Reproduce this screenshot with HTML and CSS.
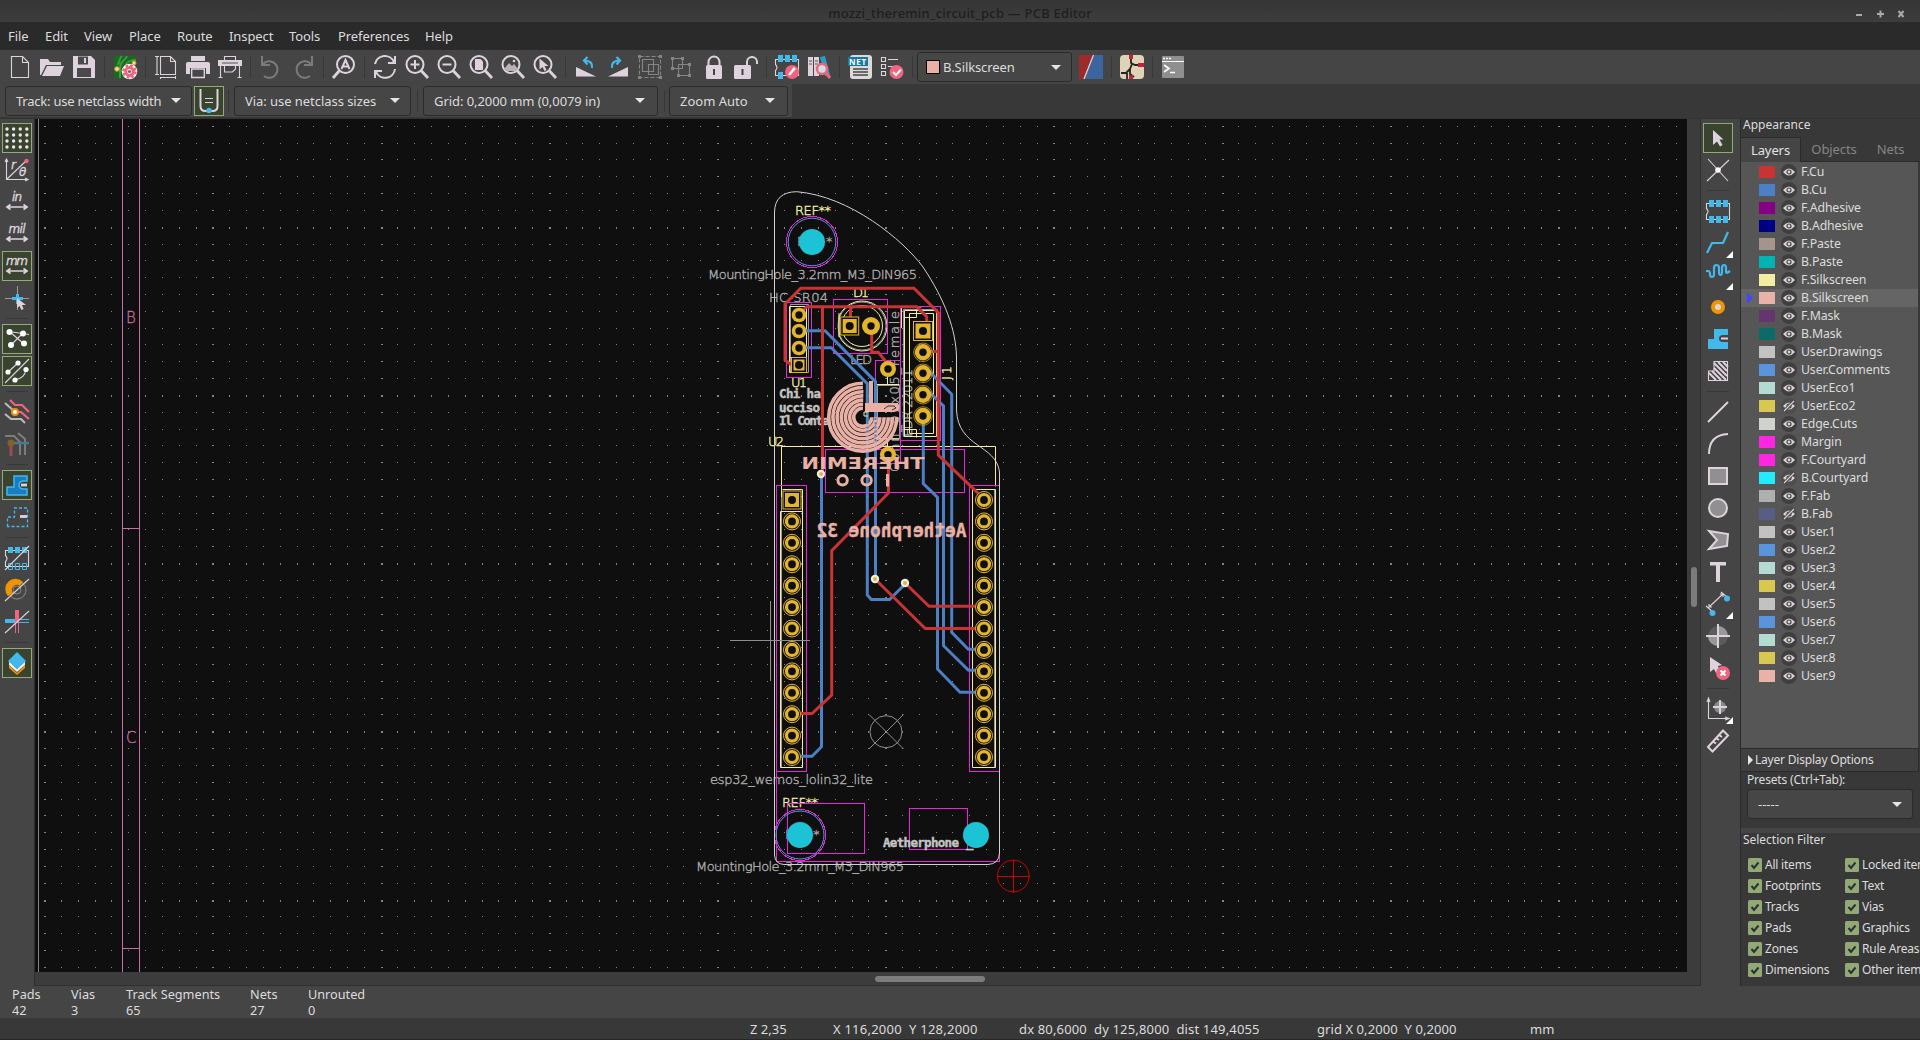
FILE: index.html
```html
<!DOCTYPE html>
<html lang="en">
<head>
<meta charset="utf-8">
<title>mozzi_theremin_circuit_pcb — PCB Editor</title>
<link rel="stylesheet" href="styles.css">
</head>
<body>
<div class="window">
<header class="titlebar"><span class="title">mozzi_theremin_circuit_pcb — PCB Editor</span>
<svg class="wm" width="54" height="10" viewBox="0 0 54 10"><path d="M1 6h6" class="wmb"/><path d="M22 5h7M25.500 1.500v7" class="wmb"/><path d="M43.500 2l5 6M48.500 2l-5 6" class="wmb"/></svg></header>
<nav class="menu"><span class="m1">File</span><span class="m2">Edit</span><span class="m3">View</span><span class="m4">Place</span><span class="m5">Route</span><span class="m6">Inspect</span><span class="m7">Tools</span><span class="m8">Preferences</span><span class="m9">Help</span></nav>

<div class="toolbar">
<i><svg viewBox="0 0 24 24"><path d="M3.500 1.500h11l6 6v15h-17zM14.500 1.500v6h6" class="s1"/></svg></i>
<i><svg viewBox="0 0 24 24"><path d="M0 20V4h8l2 3h11v3H6L1 20z" class="f"/><path d="M7 11h17l-4 10H2z" class="f"/></svg></i>
<i><svg viewBox="0 0 24 24"><path d="M1 1h18l4 4v18H1z" class="f"/><path d="M6 1.500h10v8H6zM5 13h14v9H5z" fill="#4a4a4a"/><path d="M12 3h2v5h-2z" class="f"/></svg></i>
<b></b>
<i><svg viewBox="0 0 24 24"><rect x="1" y="1" width="22" height="22" rx="3" fill="#176b1c"/><path d="M9 1c-4 3-1 6-5 9M14 1c-2 5-7 5-7 12v10M23 5c-8 0-11 4-11 8" fill="none" stroke="#3c9b3e" stroke-width="2"/><circle cx="4" cy="14" r="2.300" fill="#eee0a8" stroke="#d89526"/><circle cx="21" cy="8" r="2" fill="#eee0a8" stroke="#d89526"/><circle cx="16.500" cy="16.500" r="7.800" fill="#fff"/><circle cx="16.500" cy="16.500" r="6" fill="none" stroke="#f2647e" stroke-width="2.600" stroke-dasharray="2.600 2.110"/><circle cx="16.500" cy="16.500" r="3.900" fill="#fff" stroke="#f2647e" stroke-width="3"/><circle cx="16.500" cy="16.500" r="1.600" fill="#666"/></svg></i>
<b></b>
<i><svg viewBox="0 0 24 24"><path d="M6.500 1.500h10l5 5v13h-15zM16.500 1.500v5h5M1 1.500h4M3 1.500v18M1 19.500h4M6.500 22v2M21.500 21v3M6.500 22.500h15" class="s1"/></svg></i>
<i><svg viewBox="0 0 24 24"><path d="M5 1h14v5H5zM2 7h20q2 0 2 2v10h-4v-6H4v6H0V9q0-2 2-2z" class="f"/><path d="M5.700 14h12.600v8.500H5.700z" fill="#474747" stroke="#ded3dd" stroke-width="1.400"/></svg></i>
<i><svg viewBox="0 0 24 24"><path d="M6.500 1.500h11v4h-11z" class="s1"/><path d="M0 5h24v6H0z" class="f"/><path d="M6.500 9v8h8l3-3V9M2.500 11v12M21.500 11v12M.5 22.500h4M19.500 22.500h4" class="s1" fill="#474747"/><path d="M4 8h16" stroke="#555"/></svg></i>
<b></b>
<i><svg viewBox="0 0 24 24"><path d="M3 1v9h8M3.500 9.500A8.300 8.300 0 1 1 5 21" class="sd"/></svg></i>
<i><svg viewBox="0 0 24 24"><path d="M21 1v9h-8M20.500 9.500A8.300 8.300 0 1 0 19 21" class="sd"/></svg></i>
<b></b>
<i><svg viewBox="0 0 24 24"><circle cx="13.500" cy="9.500" r="8.500" class="s2"/><path d="M7.500 15.500L1 23" class="s3"/><path d="M9.500 14l4-9 4 9M11 11.500h5" class="s2"/></svg></i>
<b></b>
<i><svg viewBox="0 0 24 24"><path d="M2 9A10 10 0 0 1 21 7M22 1v7h-7M22 14A10 10 0 0 1 3 17M2 23v-7h7" class="s2"/></svg></i>
<i><svg viewBox="0 0 24 24"><circle cx="10" cy="9.500" r="8.500" class="s2"/><path d="M16 15.500l7 7.500" class="s3"/><path d="M5.500 9.500h9M10 5v9" class="s2"/></svg></i>
<i><svg viewBox="0 0 24 24"><circle cx="10" cy="9.500" r="8.500" class="s2"/><path d="M16 15.500l7 7.500" class="s3"/><path d="M5.500 9.500h9" class="s2"/></svg></i>
<i><svg viewBox="0 0 24 24"><circle cx="10" cy="9.500" r="8.500" class="s2"/><path d="M16 15.500l7 7.500" class="s3"/><path d="M6 4h5.500L14 6.500V15H6z" class="f"/></svg></i>
<i><svg viewBox="0 0 24 24"><circle cx="10" cy="9.500" r="8.500" class="s2"/><path d="M16 15.500l7 7.500" class="s3"/><path d="M3 14l5-6 3 3 2-2 4 5-2 2H5z" fill="#b9b1b8"/><circle cx="13" cy="6" r="1.300" class="f"/></svg></i>
<i><svg viewBox="0 0 24 24"><circle cx="10" cy="9.500" r="8.500" class="s2"/><path d="M16 15.500l7 7.500" class="s3"/><path d="M6.500 3.500v11l3-2.500 2 4 2-1-2-4h4z" class="f"/></svg></i>
<b></b>
<i><svg viewBox="0 0 24 24"><path d="M2 12l20 9.500H2z" class="f"/><path d="M18 13q1-7-7-7.500M13.500 2L10 5.500l3.500 4" class="blu"/></svg></i>
<i><svg viewBox="0 0 24 24"><path d="M22 12L2 21.500h20z" class="f"/><path d="M6 13q-1-7 7-7.500M10.500 2L14 5.500l-3.500 4" class="blu"/></svg></i>
<i><svg viewBox="0 0 24 24"><path d="M1.500 1.500h21v21h-21z" class="dis" stroke-dasharray="4 2"/><path d="M4.500 4.500h11v12h-11zM10.500 9.500h10v10h-10z" class="dis" fill="#454545"/><path d="M0 0h3v3H0zM21 0h3v3h-3zM0 21h3v3H0zM21 21h3v3h-3z" fill="#858585"/></svg></i>
<i><svg viewBox="0 0 24 24"><path d="M2.500 3.500h10v10h-10zM8.500 9.500h11v11h-11z" class="dis" fill="#454545"/><path d="M1 2h3v3H1zM11 2h3v3h-3zM1 12h3v3H1zM18 8h3v3h-3zM7 19h3v3H7zM18 19h3v3h-3z" fill="#858585"/></svg></i>
<i><svg viewBox="0 0 24 24"><path d="M6.500 11V7a5.500 5.500 0 0 1 11 0v4" class="s2"/><rect x="4" y="10" width="16" height="14" rx="1.500" class="f"/><path d="M12 14v6" class="dk"/></svg></i>
<i><svg viewBox="0 0 24 24"><path d="M13 11V7a5 5 0 0 1 10 0v2" class="s2"/><rect x="0" y="10" width="17" height="14" rx="1.500" class="f"/><path d="M8.500 14v6" class="dk"/></svg></i>
<b></b>
<i><svg viewBox="0 0 24 24"><path d="M.5 4.500h23v16H.5v-5q3-3 0-6z" class="s1"/><path d="M3 0h5v7H3zM10 0h5v7h-5zM17 0h5v7h-5zM3 17h5v7H3z" class="bf"/><circle cx="17" cy="17" r="7" fill="#f2647e"/><path d="M14 20l5-6M18 13l2 2" stroke="#fff" stroke-width="2.500"/></svg></i>
<i><svg viewBox="0 0 24 24"><path d="M1 2h5v19H1zM7 2h5v19H7z" class="f"/><path d="M13 2l5-1 5 19-5 1z" fill="#2e9bc7"/><path d="M2 6h3M2 9h3M8 6h3M8 9h3" stroke="#555"/><circle cx="15" cy="14" r="5" fill="#c6e3eb" stroke="#f2647e" stroke-width="2.500"/><path d="M19 18l4 5" stroke="#f2647e" stroke-width="3"/></svg></i>
<b></b>
<i><svg viewBox="0 0 24 24"><rect x="2" y="0" width="22" height="24" rx="3" fill="#dcd9da"/><path d="M5 14h15M5 17h15M5 20h15" stroke="#454545" stroke-width="1.500"/><path d="M0 2h20v9H0z" fill="#1678a5"/><text x="1" y="9.500" class="net" textLength="17">NET</text></svg></i>
<i><svg viewBox="0 0 24 24"><path d="M1.500 2.500h4v4h-4zM1.500 9.500h4v4h-4zM1.500 16.500h4v4h-4zM8 4.500h10M8 11.500h7" class="s1"/><circle cx="16.500" cy="17" r="7" fill="#f2647e"/><path d="M13 17l3 3 5-5.500" stroke="#fff" stroke-width="2" fill="none"/></svg></i>
<b></b>
<div class="combo layercombo"><em class="sw silk"></em><span>B.Silkscreen</span><u></u></div>
<i><svg viewBox="0 0 24 24"><path d="M0 0h15L5 24H0z" fill="#9e2a2c"/><path d="M15 0h9v24H5z" fill="#3d659d"/><path d="M14.500 0L5 24" stroke="#ddd" stroke-width="1.200"/></svg></i>
<b></b>
<i><svg viewBox="0 0 24 24"><rect width="24" height="24" rx="4" fill="#ded2b7"/><path d="M11 2v6l4 2h7M12 9l-2 5v5l4 3M10 14l-4 4H1M7 24v-6" fill="none" stroke="#27231f" stroke-width="1.800"/><path d="M9 0h4v4H9zM18 8h6v4h-6zM9 20h4v4H9z" fill="#c41f3c"/></svg></i>
<b></b>
<i><svg viewBox="0 0 24 24"><rect x="1" y="1" width="22" height="22" rx="1" fill="#8f8f8f"/><path d="M2 3.500h8" stroke="#fff" stroke-width="1.500" stroke-dasharray="2 1"/><path d="M1 6.500h22" stroke="#fff"/><path d="M3 10l5 3.500L3 17M9 17.500h5" stroke="#fff" fill="none" stroke-width="1.600"/></svg></i>
</div>

<div class="toolbar2"><div class="tb2in">
<div class="combo c1"><span>Track: use netclass width</span><u></u></div>
<i class="on"><svg viewBox="0 0 24 24"><path d="M3.500 0v17q0 5 5 5h7q5 0 5-5V0" class="s2"/><path d="M8 9.500h8M8 13.500h8" class="s1"/><circle cx="12" cy="21.500" r="2.800" class="bf"/></svg></i><b></b>
<div class="combo c2"><span>Via: use netclass sizes</span><u></u></div><b></b>
<div class="combo c3"><span>Grid: 0,2000 mm (0,0079 in)</span><u></u></div><b></b>
<div class="combo c4"><span>Zoom Auto</span><u></u></div>
</div></div>

<main class="work">
<aside class="tools left">
<i class="on"><svg viewBox="0 0 24 24"><path d="M2 3h21M2 9h21M2 15h21M2 21h21" stroke="#eee6ed" stroke-width="3.400" stroke-linecap="round" stroke-dasharray="0.010 6.600"/></svg></i>
<i><svg viewBox="0 0 24 24"><path d="M1.500 1v20.500h21M0 4l1.500-3L3 4M20 20l3 1.500-3 1.500M2 21L21 3" class="s1"/><text x="6" y="11" class="ic">r</text><text x="14" y="18" class="ic it">θ</text><circle cx="21.500" cy="3" r="2.200" fill="#f2647e"/></svg></i>
<i><svg viewBox="0 0 24 24"><text x="12" y="11" class="ic mid" textLength="10">in</text><path d="M2 17h20M5.500 14.500L2 17l3.500 2.500M18.500 14.500L22 17l-3.500 2.500" class="s15"/></svg></i>
<i><svg viewBox="0 0 24 24"><text x="12" y="11" class="ic mid" textLength="17">mil</text><path d="M2 17h20M5.500 14.500L2 17l3.500 2.500M18.500 14.500L22 17l-3.500 2.500" class="s15"/></svg></i>
<i class="on"><svg viewBox="0 0 24 24"><text x="12" y="11" class="ic mid" textLength="22">mm</text><path d="M2 17h20M5.500 14.500L2 17l3.500 2.500M18.500 14.500L22 17l-3.500 2.500" class="s15"/></svg></i>
<i><svg viewBox="0 0 24 24"><path d="M12.500 0v24M0 12.500h24" stroke="#9a9a9a"/><path d="M7 12.500h11M12.500 8v10" stroke="#42b8eb" stroke-width="3"/><path d="M12 12v10l2.500-2 2 4 2-1-1.500-4h4z" class="f"/></svg></i>
<b></b>
<i class="on"><svg viewBox="0 0 24 24"><path d="M5 5l14 12M4 4.500l20 3M6 18L18 6" class="s1"/><g fill="#fff"><circle cx="4.500" cy="5" r="3"/><circle cx="18" cy="6.500" r="3"/><circle cx="6" cy="18" r="3"/><circle cx="19" cy="16.500" r="3"/></g></svg></i>
<i class="on"><svg viewBox="0 0 24 24"><path d="M0 24L24 0M3 13L13 4M9 21q11-1 12-11" class="s1"/><g fill="#fff"><circle cx="3" cy="13" r="2.600"/><circle cx="13" cy="4" r="2.600"/><circle cx="10" cy="21" r="2.600"/><circle cx="21" cy="10.500" r="2.600"/></g></svg></i>
<b></b>
<i><svg viewBox="0 0 24 24"><path d="M0 3l9 8M0 14l6 5h10l4 4" stroke="#bbb" stroke-width="2" fill="none"/><path d="M5 0l5 5h7l7 7M10 12h6l8 7" stroke="#f2647e" stroke-width="2.200" fill="none"/><circle cx="10" cy="12" r="3" fill="#fff" stroke="#ed920b" stroke-width="2"/></svg></i>
<i class="dim"><svg viewBox="0 0 24 24"><path d="M0 4h9l6 6v13M13 1l7 6v16" stroke="#aaa" stroke-width="2" fill="none"/><path d="M6 11v13" stroke="#e0506c" stroke-width="3"/><path d="M6 11h18" stroke="#42a8cb" stroke-width="2.500"/><circle cx="6" cy="11" r="3.500" fill="#bb7512"/></svg></i>
<b></b>
<i class="on"><svg viewBox="0 0 24 24"><path d="M2 22V14h7V3h13v5h-3q-5 0-5 4t5 4h3v6z" fill="#177ec1" stroke="#42b8eb" stroke-width="1.500"/><path d="M16 12h6" class="s3"/></svg></i>
<i><svg viewBox="0 0 24 24"><path d="M2.500 21.500V12h7V3h13v18.500z" stroke="#42b8eb" fill="none" stroke-width="1.300" stroke-dasharray="3 2"/><path d="M15 11.500h7" class="s3"/></svg></i>
<b></b>
<i><svg viewBox="0 0 24 24"><path d="M.5 4.500h23v16H.5v-5q3-3 0-6z" class="s1"/><path d="M3 1h5v6H3zM10 1h5v6h-5zM17 1h5v6h-5z" class="bf"/><path d="M3.500 17.500h4v6h-4zM10.500 17.500h4v6h-4zM17.500 17.500h4v6h-4z" stroke="#42b8eb" fill="none"/><path d="M0 24L24 0" class="s1"/></svg></i>
<i><svg viewBox="0 0 24 24"><circle cx="12" cy="12" r="9" fill="none" stroke="#777" stroke-width="1.300"/><path d="M3 18A9.500 9.500 0 0 1 18 4L15 8A5 5 0 0 0 8 15z" fill="#f09400"/><circle cx="12" cy="12" r="4" fill="none" stroke="#888"/><path d="M0 23L24 1" class="s1"/></svg></i>
<i><svg viewBox="0 0 24 24"><path d="M0 11h13" stroke="#42b8eb" stroke-width="4"/><path d="M13 9.500h11M13 12.500h11" stroke="#42b8eb"/><path d="M12 0v12" stroke="#f2647e" stroke-width="4"/><path d="M10.500 12v11M13.500 12v11" stroke="#f2647e"/><path d="M0 23L24 1" class="s1"/></svg></i>
<b></b>
<i class="on"><svg viewBox="0 0 24 24"><path d="M4 14l8 8 8-8v3l-8 7-8-7z" fill="#f09400"/><path d="M4 10l8 8 8-8v4l-8 7-8-7z" fill="#eee"/><path d="M12 1l9 9-9 8-9-8z" class="bf"/></svg></i>
</aside>

<section class="canvaswrap">
<svg class="pcb" width="1652" height="853" viewBox="35 119 1652 853">
<path id="grid" shape-rendering="crispEdges" fill="#858585"/>
<g shape-rendering="crispEdges" fill="none"><path d="M38.500 119v853" stroke="#848484"/><path d="M122.500 119v853M139.500 119v853M122 528.500h17M122 948.500h17" stroke="#c86ea8"/></g>
<g class="sheet"><text x="126" y="322.500">B</text><text x="126" y="742.500">C</text></g>

<g class="fab">
<text x="708" y="278.500" textLength="209">MountingHole_3.2mm_M3_DIN965</text>
<text x="769" y="301.500" textLength="59">HC-SR04</text><text x="850" y="364" textLength="22">LED</text>
<text transform="translate(899 472) rotate(-90)" textLength="161">Conn_01x05_Female</text>
<text transform="translate(912 437) rotate(-90)" textLength="68">EDR 22011</text>
<text x="710" y="783.500" textLength="163">esp32_wemos_lolin32_lite</text>
<text x="696" y="870.500" textLength="208">MountingHole_3.2mm_M3_DIN965</text>
<text x="797" y="246">R</text><text x="826" y="246">*</text><text x="785" y="839">R</text><text x="813" y="839">*</text>
</g>
<g class="fabline"><path d="M790.500 304.500h18v68h-18zM903.500 309.500h34v127h-34zM877.500 385.500h22v53h-22zM781.500 489v278M994.500 489v278"/><circle cx="862" cy="326" r="24"/></g>
<g class="silk1">
<path d="M789.500 306.500h17v66h-17zM789.500 357.500h17M904.500 310.500h32v126h-32zM909.500 313.500h24v120h-24zM904.500 317.500h12v-8M904.500 429.500h12v8M901.500 328v-21h20M781.500 497v-50.500h214v40"/>
<path d="M887.500 377v8M887.500 439v8M876.500 384.500h23M876.500 439h23M780.500 511.500h22v256h-22zM782.500 489.500h20v22M972.500 489.500h23v278h-23z"/>
<path d="M839 316.500a25 25 0 1 1 0 19zM839 313v24"/><circle cx="862" cy="326" r="20.500"/></g>
<g class="silkt"><text x="795" y="214.500" textLength="36">REF**</text><text x="853" y="297" textLength="16">D1</text><text x="791" y="386.500" textLength="16">U1</text><text x="768" y="446" textLength="16">U2</text><text x="782" y="806.500" textLength="36">REF**</text><text transform="translate(951 380) rotate(-90)" textLength="14">J1</text></g>
<g class="court"><path d="M786.500 302.500h25v75h-25zM833.500 299.500h54v54h-54zM900.500 306.500h40v134h-40zM900.500 360.500h-25v103h25zM825.500 449.500h139v43h-139zM776.500 485.500h30v286h-30zM999.500 485.500h-30v286h30zM776.500 771v90.500h223v-376M787.500 803.500h77v50h-77zM909.500 808.500h58v41h-58z"/><circle cx="812" cy="242" r="25.500"/><circle cx="800" cy="835" r="25.500"/></g>
<g fill="none" stroke="#5b94e0"><circle cx="812" cy="242" r="23.800"/><circle cx="800" cy="835" r="24"/></g>
<path class="edge" d="M774.500 212Q775 192 796.700 191.700C850 196 903 240 923 267C945 300 956 330 956.500 357V410C958 448 996 444 999.500 472V853Q999 864 988 864.500H784Q775 864 774.500 855Z"/>
<g class="boldt"><text x="779" y="397.500" textLength="42">Chi ha</text><text x="779" y="411.500" textLength="41">ucciso</text><text x="779" y="425" textLength="50">Il Conte</text><text x="883" y="847" textLength="76">Aetherphone</text><text x="966" y="847">_</text></g>
<g class="blue"><path d="M805 330.700h20l50.500 51V579M805 347.700h26.300l36 36V595l4 4.500h18.300l16-16M923.300 416v67.700l14.200 13.600V669l22.500 23.300h20M929 392l14.500 14v239.700l25 24.600H984M929 371l22.700 23.300v238l16.600 17H984M821.500 474v272.700l-9.500 9.600h-17"/></g>
<g class="red"><path d="M799 364h-9l-5-4v-56l15.700-15.700H914l24.300 24.400V455l41 39.300M800 313l6.700-6.300h110l10 10V325M822.500 306.700V474M850.500 306.700V322M871.700 330v22.300h6.600l9.700 12M938 351.500h-14M888.500 460v33l-56.800 57.700V695L812 713.500h-17M875 579l50.300 49.500H984M905 583l24 23.300h55"/></g>
<g class="logo"><circle class="ring" cx="862.700" cy="417.300" r="34"/><circle class="ring" cx="862.700" cy="417.300" r="29.800"/><circle class="ring" cx="862.700" cy="417.300" r="25.600"/><circle class="ring" cx="862.700" cy="417.300" r="21.400"/><circle class="ring" cx="862.700" cy="417.300" r="17.200"/><circle class="ring" cx="862.700" cy="417.300" r="13"/><circle class="ring" cx="862.700" cy="417.300" r="9"/>
<path d="M869 381h4v22h25q3 4 0 8l-4 1h-29v-9h4z" fill="#e9b1a5"/><path d="M884 409l4-3h6l2 2-4 2" stroke="#333" fill="none" stroke-width="1"/><path d="M867.500 418v15M875.500 418v25" stroke="#4d7fc4" stroke-width="2" stroke-dasharray="2 2.200"/><path d="M868 416h-4v-4h4" stroke="#f2eda1" fill="none"/></g>
<g id="pads"></g>
<g class="mirror"><text transform="translate(924.500 469) scale(-1 1)" class="th" textLength="123" lengthAdjust="spacingAndGlyphs">THEREMIN</text><circle cx="842.600" cy="480.300" r="4.700"/><circle cx="866.600" cy="480.300" r="4.700"/><path d="M887.500 474v12.500"/><text transform="translate(966.500 536.500) scale(-1 1)" class="ae" textLength="150" lengthAdjust="spacingAndGlyphs">Aetherphone 32</text></g>
<g fill="#1cc3d5"><circle cx="812" cy="242" r="13"/><circle cx="800" cy="835" r="13"/><circle cx="976" cy="835" r="13"/></g>
<g fill="none" stroke="#8e8e8e"><circle cx="886" cy="731.700" r="16"/><path d="M869 714.500l34.500 34.500M903.500 714.500L869 749"/><path d="M730 640.500h80M770.500 601v80"/></g>
<g fill="none" stroke="#c80404"><circle cx="1013.300" cy="876" r="16"/><path d="M997 876.500h33M1013.500 860v33"/></g>
</svg>
<div class="vs"><s></s></div><div class="hs"><s></s></div>
</section>

<aside class="tools right">
<i class="on"><svg viewBox="0 0 24 24"><path d="M7 4v15l4-3.500 3 5 2.500-1.500-3-5.500h4z" class="f"/></svg></i>
<i><svg viewBox="0 0 24 24"><path d="M2 1l20 22M23 2L1 23" class="s1"/><circle cx="12" cy="12" r="2.800" fill="#fff"/></svg></i><b></b>
<i><svg viewBox="0 0 24 24"><path d="M.5 4.500h23v16H.5v-5q3-3 0-6z" class="s1"/><path d="M3 1h5v7H3zM10 1h5v7h-5zM17 1h5v7h-5zM3 17h5v7H3zM10 17h5v7h-5zM17 17h5v7h-5z" class="bf"/></svg></i>
<i class="more"><svg viewBox="0 0 24 24"><path d="M1 22l5-10h11l5-11" class="blu"/></svg></i>
<i class="more"><svg viewBox="0 0 24 24"><path d="M0 8h2q2 0 2 3t2 3 2-3V5q0-3 2.500-3T13 5v4q0 3 1.500 3T16 9V5q0-3 2-3t2 3v4q0 2 4-1" class="blu"/></svg></i>
<i><svg viewBox="0 0 24 24"><circle cx="12" cy="12" r="5" fill="#ded3dd" stroke="#f09400" stroke-width="4"/></svg></i>
<i><svg viewBox="0 0 24 24"><path d="M2 22V12h6V2h14v6h-5q-4 0-4 3.500t4 3.500h5v7z" class="bf"/><path d="M15 11.500h7" class="s2"/></svg></i>
<i><svg viewBox="0 0 24 24"><path d="M2.500 21.500V12H8V2.500h13.500v19z" class="s1"/><path d="M3 14l7 7M6 12l9 9M8 9l12 12M8 4l13 13M12 3l9 9M17 3l5 5" class="s2"/></svg></i><b></b>
<i><svg viewBox="0 0 24 24"><path d="M2 22L22 2" class="s2"/></svg></i>
<i><svg viewBox="0 0 24 24"><path d="M3 22Q3 3 22 2" class="s2"/></svg></i>
<i><svg viewBox="0 0 24 24"><path d="M3 4h18v16H3z" class="s2" fill="#909090"/></svg></i>
<i><svg viewBox="0 0 24 24"><circle cx="12" cy="12" r="9" class="s2" fill="#909090"/></svg></i>
<i><svg viewBox="0 0 24 24"><path d="M3 3l19 3-1 12-18 3 8-9z" class="s2" fill="#909090"/></svg></i>
<i><svg viewBox="0 0 24 24"><path d="M4 2h16v3.500h-6V22h-4V5.500H4z" class="f"/></svg></i>
<i class="more"><svg viewBox="0 0 24 24"><path d="M0 14l7 6M15 0l6 5M3 15L17 2M3 12v3h3M14 2h3v3" class="s1"/><circle cx="6.500" cy="21" r="3" class="bf"/><circle cx="21" cy="6.500" r="3" class="bf"/></svg></i>
<i><svg viewBox="0 0 24 24"><circle cx="12" cy="12" r="10" fill="#5c5c5c"/><path d="M12 2a10 10 0 0 1 10 10H12zM12 22A10 10 0 0 1 2 12h10z" fill="#999"/><path d="M12 0v24M0 12h24" class="s2"/></svg></i>
<i><svg viewBox="0 0 24 24"><path d="M4 1v15l4-3 2 4 4-2-2-5 4-1z" class="f"/><circle cx="17" cy="17" r="7" fill="#f2647e"/><path d="M14.500 14.500l5 5M19.500 14.500l-5 5" stroke="#fff" stroke-width="2.200"/></svg></i><b></b>
<i class="more"><svg viewBox="0 0 24 24"><path d="M2.500 2v19.500h20M1 5l1.500-4L4 5M19 20l4 1.500-4 1.500" class="s1"/><circle cx="14" cy="10" r="6" fill="#888"/><path d="M14 3v14M7 10h14" class="s2"/></svg></i>
<i><svg viewBox="0 0 24 24"><path d="M2 18L17 1.500l5 5L6.500 22.500zM13 6l3 2M10 9l3 2M7 12.500l3 2" class="s2"/></svg></i>
</aside>

<aside class="panel">
<h2>Appearance</h2>
<div class="tabs"><span class="tab act">Layers</span><span class="tab">Objects</span><span class="tab nets">Nets</span></div>
<div class="layers" id="layers"></div>
<div class="ldo"><em></em>Layer Display Options</div>
<div class="presets"><label>Presets (Ctrl+Tab):</label><div class="combo"><span>-----</span><u></u></div></div>
<h2 class="sf">Selection Filter</h2>
<div class="filter" id="filter"></div>
</aside>
</main>

<footer class="info"><div class="n1">Pads<br>42</div><div class="n2">Vias<br>3</div><div class="n3">Track Segments<br>65</div><div class="n4">Nets<br>27</div><div>Unrouted<br>0</div></footer>
<footer class="status"><span class="p1">Z 2,35</span><span class="p2">X 116,2000&nbsp; Y 128,2000</span><span class="p3">dx 80,6000&nbsp; dy 125,8000&nbsp; dist 149,4055</span><span class="p4">grid X 0,2000&nbsp; Y 0,2000</span><span>mm</span></footer>
</div>
<script src="script.js"></script>
</body>
</html>
```
FILE: styles.css
```css
*{box-sizing:border-box}
body{margin:0;background:#383838;font-family:"Noto Sans","Open Sans",sans-serif;font-size:12.5px;color:#dcdcdc;overflow:hidden}
.window{width:1920px;height:1040px;display:flex;flex-direction:column;overflow:hidden}
.titlebar{height:22px;background:linear-gradient(#353535,#3d3d3d);position:relative;text-align:center;line-height:27px;color:#1e1e1e;font-weight:500;overflow:hidden}
.title{font-size:13px;letter-spacing:.2px}
.wm{position:absolute;right:11px;top:9px}
.wmb{stroke:#aaa;stroke-width:2;fill:none}
.menu{height:28px;background:#2a2a2a;display:flex;padding-left:8px;line-height:29px;font-size:13px;letter-spacing:-.08px}
.menu span{white-space:nowrap}
.m1{width:37px}.m2{width:39px}.m3{width:45px}.m4{width:48px}.m5{width:52px}.m6{width:60px}.m7{width:49px}.m8{width:87px}
.toolbar{height:34px;background:#454545;display:flex;align-items:center;padding-left:4px}
i{flex:none;width:32px;height:32px;display:flex;align-items:center;justify-content:center;position:relative}
i svg{width:24px;height:24px;overflow:visible}
.toolbar>b,.tb2in>b{width:9px;height:22px;flex:none;background:linear-gradient(#373737,#373737) 4px 0/1px 100% no-repeat}
.f{fill:#ded3dd}.bf{fill:#42b8eb}
.s1,.s15,.s2,.s3{stroke:#ded3dd;fill:none;stroke-width:1.1}
.s15{stroke-width:1.7}.s2{stroke-width:2}.s3{stroke-width:2.8}
.s2[fill="#909090"]{fill:#909090}
.sd{fill:none;stroke:#7b7b7b;stroke-width:2}
.blu{fill:none;stroke:#42b8eb;stroke-width:2.2}
.dis{stroke:#858585;stroke-width:1.1;fill:none}
.dk{stroke:#444;stroke-width:2}
.net{font:bold 8px "Noto Sans",sans-serif;fill:#fff}
.ic{font-family:"DejaVu Sans",sans-serif;font-size:12px;fill:#ded3dd;stroke:#ded3dd;stroke-width:.3}
.mid{text-anchor:middle}.it{font-style:italic}
.combo{height:30px;border:1px solid #2a2a2a;border-radius:3px;background:#464646;display:flex;align-items:center;justify-content:space-between;padding:0 8px 0 10px;white-space:nowrap;flex:none;font-size:13px}
.combo u{width:0;height:0;border:5px solid transparent;border-top-color:#e4e4e4;border-bottom:0}
.layercombo{width:155px;justify-content:flex-start;padding-left:8px;margin-right:3px;letter-spacing:-.1px}
.layercombo span{margin-left:3px}.layercombo u{margin-left:auto;margin-right:2px}
.sw{width:14px;height:14px;border:1px solid #0a0a0a}
.silk{background:#e9b1a5}
.toolbar2{height:35px;background:#383838;border-bottom:1px solid #333}
.tb2in{width:792px;height:33px;background:#454545;display:flex;align-items:center;padding-left:5px}
.c1{width:187px;margin-right:2px;letter-spacing:-.23px}.c2{width:177px;margin:0 2px 0 1px;letter-spacing:-.05px}.c3{width:235px;margin:0 2px 0 1px;letter-spacing:-.07px}.c4{width:119px}
.c1 u{margin-right:2px}.c2 u{margin-right:2px}.c3 u,.c4 u{margin-right:4px}
.on{width:30px;height:30px;border:1px solid #93ab74;background:#39432f}
.work{height:867px;display:flex;background:#454545}
.tools{display:flex;flex-direction:column;align-items:center;padding-top:3px}
.tools i{height:32px}
.tools i.on{height:30px;margin:1px 0}
.tools b{height:9px;width:22px;flex:none;background:linear-gradient(#383838,#383838) 0 4px/100% 1px no-repeat}
.left{width:34px}
.right{width:39px;padding-right:5px}
.dim{opacity:.55}
.more:after{content:"";position:absolute;right:1px;bottom:1px;border:solid transparent;border-width:7px 0 0 7px;border-bottom:7px solid #fff;border-top:0}
.canvaswrap{width:1667px;height:867px;background:#3c3c3c;border-left:1px solid #2e2e2e;border-right:1px solid #303030;border-bottom:1px solid #303030;display:grid;grid-template:853px 13px/1652px 13px}
.pcb{background:#0f0f0f;display:block}
.vs s,.hs s{display:block;background:#7c7c7c;border-radius:4px}
.vs s{width:6px;height:40px;margin:448px 0 0 4px}
.hs s{height:6px;width:110px;margin:4px 0 0 840px}
.sheet{font:200 15px "DejaVu Sans",sans-serif;fill:#c86ea8;stroke:#c86ea8;stroke-width:.3}
.fab,.silkt{font:200 13px "DejaVu Sans",sans-serif;fill:#aaa;stroke:#aaa;stroke-width:.4}
.silkt{fill:#f2eda1;stroke:#f2eda1}
.fabline{fill:none;stroke:#999}
.silk1{fill:none;stroke:#f2eda1}
.court{fill:none;stroke:#e627d9;shape-rendering:crispEdges}
.edge{fill:none;stroke:#d0d2cd}
.boldt{font:bold 12.5px "DejaVu Sans Mono",monospace;fill:#c4c4c4;stroke:#c4c4c4;stroke-width:.4}
.blue,.red{fill:none;stroke:#4d7fc4;stroke-width:3}
.red{stroke:#c83434}
.ring{fill:none;stroke:#e9b1a5;stroke-width:3.6}
.mirror{fill:#e9b1a5}
.mirror circle,.mirror path{fill:none;stroke:#e9b1a5;stroke-width:3}
.th{font:bold 16.5px "DejaVu Sans",sans-serif}
.ae{font:bold 19.5px "DejaVu Sans Mono",monospace;stroke:#e9b1a5;stroke-width:.4}
.panel{width:180px;flex:none;background:#383838;border-left:1px solid #2b2b2b}
.panel h2{margin:0;height:18px;line-height:12px;padding-left:2px;font-size:12px;font-weight:400;letter-spacing:.02px}
.tabs{height:25px;display:flex;align-items:center;font-size:13px;color:#858585;border-bottom:1px solid #2b2b2b;letter-spacing:-.1px}
.tab{width:60px;height:25px;line-height:25px;text-align:center}
.tab.act{background:#454545;color:#e2e2e2;border:1px solid #2b2b2b;border-width:1px 1px 0 0}
.tab:nth-child(2){width:66px}.nets{width:47px}
.layers{height:586px;background:#565656;padding-top:1px;margin-right:2px;font-size:12.3px;letter-spacing:-.12px}
.row{height:18px;display:flex;align-items:center;line-height:18px;padding-left:18px;position:relative}
.row.sel{background:#656565}
.row.sel:before{content:"";position:absolute;left:6px;top:3px;border:6px solid transparent;border-left-color:#4545ff;border-right:0}
.row em{width:16px;height:12px;margin-right:6px}
.row svg{width:16px;height:16px;margin-right:4px}
.ldo{height:24px;border:1px solid #2b2b2b;border-left:0;background:#404040;line-height:22px;display:flex;align-items:center;margin-right:1px;white-space:nowrap;font-size:12px;letter-spacing:-.2px}
.ldo em{margin:0 2px 0 7px;border:5px solid transparent;border-left-color:#e6e6e6;border-right:0}
.presets{height:56px;padding-left:6px}
.presets label{display:block;line-height:16px;height:17px;font-size:12px;letter-spacing:-.18px}
.presets .combo{width:166px;height:30px;padding-right:10px}
.panel h2.sf{border-top:5px solid #454545;height:22px;line-height:14px;letter-spacing:-.03px}
.filter{display:grid;grid-template-columns:97px 120px;grid-auto-rows:21px;padding:4px 0 0 7px;height:136px;font-size:12px;letter-spacing:-.22px}
.chk{display:flex;align-items:center;white-space:nowrap}
.chk svg{width:14px;height:14px;margin-right:3px;flex:none}
.info{height:32px;background:#454545;display:flex;padding-left:12px;line-height:16px;white-space:nowrap;font-size:12.7px}
.n1{width:59px}.n2{width:55px}.n3{width:124px}.n4{width:58px}
.status{height:22px;background:#383838;border-bottom:1px solid #272727;display:flex;padding-left:750px;line-height:22px;white-space:nowrap;font-size:13px}
.p1{width:83px}.p2{width:186px;letter-spacing:.23px}.p3{width:298px;letter-spacing:.16px}.p4{width:213px;letter-spacing:.07px}
```
FILE: script.js
```js
// Grid dots, every tenth one drawn double width or height.
let d = '';
for (let c = 0; c < 98; c++) for (let r = -6; r < 45; r++) {
  const x = Math.floor(44.7 + 16.82 * c), y = Math.floor(227.2 + 16.82 * r);
  const w = c % 10 === 0 ? 2 : 1, h = r % 10 === 0 ? 2 : 1;
  if (y < 971) d += `M${x} ${y}h${w}v${h}h-${w}z`;
}
document.getElementById('grid').setAttribute('d', d);

// Open the rings of the spiral on their upper right quarter.
document.querySelectorAll('.ring').forEach(c => {
  const r = +c.getAttribute('r'), q = Math.PI * r / 2;
  c.setAttribute('stroke-dasharray', `${q * 3} ${q}`);
});

const Y = '#e3b52e', K = '#0f0f0f';
const round = (x, y) => `<circle cx="${x}" cy="${y}" r="9" fill="${K}"/><circle cx="${x}" cy="${y}" r="8.500" fill="none" stroke="${Y}"/><circle cx="${x}" cy="${y}" r="5.500" fill="none" stroke="${Y}" stroke-width="3.200"/>`;
const fat = (x, y, r) => `<circle cx="${x}" cy="${y}" r="${r}" fill="${Y}"/><circle cx="${x}" cy="${y}" r="3.700" fill="${K}"/>`;
const square = (x, y, s) => `<rect x="${x - s - 1.5}" y="${y - s - 1.5}" width="${2 * s + 3}" height="${2 * s + 3}" fill="${K}" stroke="${Y}"/><rect x="${x - s + .5}" y="${y - s + .5}" width="${2 * s - 1}" height="${2 * s - 1}" fill="${Y}"/><circle cx="${x}" cy="${y}" r="4" fill="${K}"/>`;
let p = square(792, 500, 7.5) + round(984, 500);
for (let i = 1; i < 13; i++) p += round(792, 500 + 21.42 * i) + round(984, 500 + 21.42 * i);
p += fat(799, 315, 7.3) + fat(799, 331, 7.3) + fat(799, 348, 7.3) + square(799, 365, 6);
p += square(849.7, 326, 7.5) + fat(871, 326, 9) + fat(888, 369, 8) + fat(888, 454.7, 8) + square(923, 331, 8);
[352.3, 373.3, 394.7, 416].forEach(y => p += fat(923, y, 8.2) + `<circle cx="923" cy="${y}" r="9.300" fill="none" stroke="${Y}" stroke-width=".7"/>`);
[[821, 474], [875, 579], [905, 583]].forEach(([x, y]) => p += `<circle cx="${x}" cy="${y}" r="4.200" fill="#eee"/><circle cx="${x}" cy="${y}" r="2" fill="${Y}"/>`);
document.getElementById('pads').innerHTML = p;

const layers = [['F.Cu','#c83434'],['B.Cu','#4d7fc4'],['F.Adhesive','#840084'],['B.Adhesive','#000084'],['F.Paste','#a4948c'],['B.Paste','#00b4b4'],['F.Silkscreen','#f2eda1'],['B.Silkscreen','#e8b2a7'],['F.Mask','#653570'],['B.Mask','#0b6b66'],['User.Drawings','#c2c2c2'],['User.Comments','#5994dc'],['User.Eco1','#b4dbd2'],['User.Eco2','#d8c852',1],['Edge.Cuts','#d0d2cd'],['Margin','#ff26e2'],['F.Courtyard','#ff26e2'],['B.Courtyard','#26e9ff',1],['F.Fab','#afafaf'],['B.Fab','#585d84',1],['User.1','#c2c2c2'],['User.2','#5994dc'],['User.3','#b4dbd2'],['User.4','#d8c852'],['User.5','#c2c2c2'],['User.6','#5994dc'],['User.7','#b4dbd2'],['User.8','#d8c852'],['User.9','#e8b2a7']];
document.getElementById('layers').innerHTML = layers.map(([n, c, off]) => `<div class="row${n === 'B.Silkscreen' ? ' sel' : ''}"><em style="background:${c}"></em><svg viewBox="0 0 16 16"><circle cx="8" cy="8" r="8" fill="${off ? '#4d4d4d' : '#3f3f3f'}"/><path d="M2 8q6-7 12 0q-6 7-12 0z" fill="#ded3dd"/><circle cx="8" cy="8" r="2" fill="none" stroke="#444" stroke-width="1.200"/>${off ? '<path d="M3 13L13 3" stroke="#444" stroke-width="3"/><path d="M3 13L13 3" stroke="#ded3dd" stroke-width="1.300"/>' : ''}</svg>${n}</div>`).join('');

document.getElementById('filter').innerHTML = ['All items','Locked items','Footprints','Text','Tracks','Vias','Pads','Graphics','Zones','Rule Areas','Dimensions','Other items'].map(n => `<div class="chk"><svg viewBox="0 0 14 14"><rect width="14" height="14" rx="1.500" fill="#92a976"/><path d="M3.500 7l2.500 3 4.500-5.500" fill="none" stroke="#2b3036" stroke-width="2"/></svg>${n}</div>`).join('');
```
